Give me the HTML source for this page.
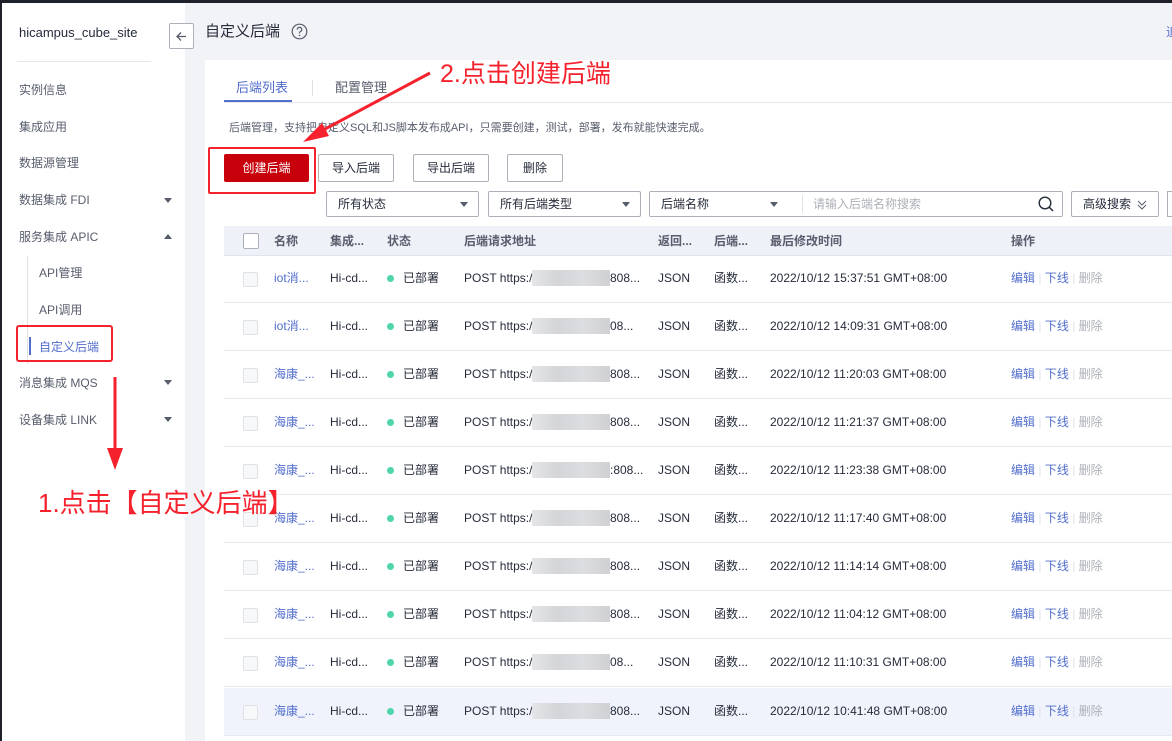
<!DOCTYPE html>
<html><head><meta charset="utf-8"><style>
*{margin:0;padding:0;box-sizing:border-box}
body{width:1172px;height:741px;overflow:hidden;background:#f2f3f7;font-family:"Liberation Sans","Noto Sans CJK SC",sans-serif;font-size:12px;color:#252b3a;position:relative}
.a{position:absolute;white-space:nowrap;line-height:16px}
#top{left:0;top:0;width:1172px;height:3px;background:#1e2129}
#lb{left:0;top:0;width:2px;height:741px;background:#1e2129}
#side{left:2px;top:3px;width:183px;height:738px;background:#fff}
.nav{left:19px;font-size:12px;color:#575d6c}
.caret{width:0;height:0;border-left:4px solid transparent;border-right:4px solid transparent;border-top:5px solid #575d6c}
.caretu{width:0;height:0;border-left:4px solid transparent;border-right:4px solid transparent;border-bottom:5px solid #575d6c}
#card{left:205px;top:60px;width:967px;height:681px;background:#fff}
.btn{height:28px;border:1px solid #adb0b8;border-radius:2px;background:#fff;font-size:12px;color:#252b3a;text-align:center;line-height:26px}
.sel{height:26px;border:1px solid #adb0b8;border-radius:2px;background:#fff;font-size:12px;line-height:24px;padding-left:11px}
.row{left:224px;width:948px;height:48px;border-bottom:1px solid #e8e9ec}
.cb{position:absolute;left:19px;top:17px;width:15px;height:15px;border:1px solid #dfe1e6;border-radius:2px;background:#f7f8fa}
.c{position:absolute;top:0;height:47px;line-height:47px;font-size:12px}
.dot{position:absolute;left:163px;top:20px;width:7px;height:7px;border-radius:50%;background:#50d4ab}
.blur{position:absolute;left:308px;top:15px;width:78px;height:16px;background:linear-gradient(90deg,#e4e5e7,#d4d5d8,#dcdde0,#cfd0d3)}
.lk{color:#526ecc}
.red{color:#f5222d}
.h{top:226px;height:30px;line-height:30px;font-weight:bold;color:#575d6c}
</style></head><body>
<div class="a" id="side"></div>
<div class="a" id="top"></div><div class="a" id="lb"></div>
<div class="a" style="left:19px;top:25px;font-size:13px;color:#252b3a">hicampus_cube_site</div>
<div class="a" style="left:17px;top:61px;width:134px;height:1px;background:#e5e6eb"></div>
<div class="a nav" style="top:82px">实例信息</div>
<div class="a nav" style="top:119px">集成应用</div>
<div class="a nav" style="top:155px">数据源管理</div>
<div class="a nav" style="top:192px">数据集成 FDI</div><div class="a caret" style="left:164px;top:198px"></div>
<div class="a nav" style="top:229px">服务集成 APIC</div><div class="a caretu" style="left:164px;top:234px"></div>
<div class="a" style="left:27px;top:256px;width:1px;height:108px;background:#dfe1e6"></div>
<div class="a nav" style="left:39px;top:265px">API管理</div>
<div class="a nav" style="left:39px;top:302px">API调用</div>
<div class="a" style="left:29px;top:337px;width:2px;height:18px;background:#526ecc"></div>
<div class="a nav" style="left:39px;top:339px;color:#526ecc">自定义后端</div>
<div class="a nav" style="top:375px">消息集成 MQS</div><div class="a caret" style="left:164px;top:380px"></div>
<div class="a nav" style="top:412px">设备集成 LINK</div><div class="a caret" style="left:164px;top:417px"></div>

<div class="a" style="left:169px;top:23px;width:25px;height:26px;border:1px solid #adb0b8;background:#fff;border-radius:2px"></div>
<svg class="a" style="left:174px;top:29px" width="15" height="15" viewBox="0 0 15 15"><path d="M12 7.5H3M7 3.5L3 7.5 7 11.5" fill="none" stroke="#575d6c" stroke-width="1.3"/></svg>
<div class="a" style="left:205px;top:23px;font-size:15px;color:#252b3a;line-height:18px">自定义后端</div>
<svg class="a" style="left:291px;top:23px" width="17" height="17" viewBox="0 0 17 17"><circle cx="8.5" cy="8.5" r="7.3" fill="none" stroke="#575d6c" stroke-width="1.2"/><path d="M6.3 6.6a2.2 2.2 0 1 1 3 2c-.6.3-.8.7-.8 1.3v.5" fill="none" stroke="#575d6c" stroke-width="1.2"/><circle cx="8.5" cy="12.4" r=".8" fill="#575d6c"/></svg>
<div class="a" style="left:1166px;top:24px;font-size:12px;color:#526ecc">追</div>

<div class="a" id="card"></div>
<div class="a" style="left:224px;top:102px;width:948px;height:1px;background:#e5e6eb"></div>
<div class="a" style="left:236px;top:80px;font-size:13px;color:#526ecc">后端列表</div>
<div class="a" style="left:224px;top:100px;width:68px;height:2px;background:#526ecc"></div>
<div class="a" style="left:312px;top:80px;width:1px;height:16px;background:#dfe1e6"></div>
<div class="a" style="left:335px;top:80px;font-size:13px;color:#575d6c">配置管理</div>
<div class="a" style="left:229px;top:120px;font-size:11px;color:#575d6c">后端管理，支持把自定义SQL和JS脚本发布成API，只需要创建，测试，部署，发布就能快速完成。</div>

<div class="a btn" style="left:224px;top:154px;width:85px;background:#c7000b;border-color:#c7000b;color:#fff">创建后端</div>
<div class="a btn" style="left:318px;top:154px;width:76px">导入后端</div>
<div class="a btn" style="left:413px;top:154px;width:76px">导出后端</div>
<div class="a btn" style="left:507px;top:154px;width:56px">删除</div>

<div class="a sel" style="left:326px;top:191px;width:153px">所有状态</div><div class="a caret" style="left:460px;top:202px"></div>
<div class="a sel" style="left:488px;top:191px;width:153px">所有后端类型</div><div class="a caret" style="left:622px;top:202px"></div>
<div class="a sel" style="left:649px;top:191px;width:414px">后端名称</div><div class="a caret" style="left:770px;top:202px"></div>
<div class="a" style="left:802px;top:195px;width:1px;height:18px;background:#dfe1e6"></div>
<div class="a" style="left:813px;top:196px;font-size:12px;color:#adb0b8">请输入后端名称搜索</div>
<svg class="a" style="left:1037px;top:195px" width="18" height="18" viewBox="0 0 18 18"><circle cx="8" cy="8" r="5.8" fill="none" stroke="#252b3a" stroke-width="1.4"/><path d="M12.2 12.2L16 16" stroke="#252b3a" stroke-width="1.5"/></svg>
<div class="a sel" style="left:1071px;top:191px;width:88px">高级搜索</div>
<svg class="a" style="left:1137px;top:199px" width="10" height="12" viewBox="0 0 10 12"><path d="M1 2l4 4 4-4M1 6l4 4 4-4" fill="none" stroke="#575d6c" stroke-width="1"/></svg>
<div class="a" style="left:1167px;top:191px;width:10px;height:26px;border:1px solid #adb0b8;background:#fff"></div>

<div class="a" style="left:224px;top:226px;width:948px;height:30px;background:#eef1f8;border-bottom:1px solid #dfe3ed"></div>
<div class="a" style="left:243px;top:233px;width:16px;height:16px;border:1px solid #adb0b8;background:#fff;border-radius:2px"></div>
<div class="a h" style="left:274px">名称</div>
<div class="a h" style="left:330px">集成...</div>
<div class="a h" style="left:387px">状态</div>
<div class="a h" style="left:464px">后端请求地址</div>
<div class="a h" style="left:658px">返回...</div>
<div class="a h" style="left:714px">后端...</div>
<div class="a h" style="left:770px">最后修改时间</div>
<div class="a h" style="left:1011px">操作</div>

<div class="a row" style="top:255px"><div class="cb"></div><div class="c lk" style="left:50px">iot消...</div><div class="c" style="left:106px">Hi-cd...</div><div class="dot"></div><div class="c" style="left:179px">已部署</div><div class="c" style="left:240px">POST https://</div><div class="blur"></div><div class="c" style="left:386px">808...</div><div class="c" style="left:434px">JSON</div><div class="c" style="left:490px">函数...</div><div class="c" style="left:546px">2022/10/12 15:37:51 GMT+08:00</div><div class="c" style="left:787px"><span class="lk">编辑</span> <span style="color:#dfe1e6">|</span> <span class="lk">下线</span> <span style="color:#dfe1e6">|</span> <span style="color:#adb0b8">删除</span></div></div>
<div class="a row" style="top:303px"><div class="cb"></div><div class="c lk" style="left:50px">iot消...</div><div class="c" style="left:106px">Hi-cd...</div><div class="dot"></div><div class="c" style="left:179px">已部署</div><div class="c" style="left:240px">POST https://</div><div class="blur"></div><div class="c" style="left:386px">08...</div><div class="c" style="left:434px">JSON</div><div class="c" style="left:490px">函数...</div><div class="c" style="left:546px">2022/10/12 14:09:31 GMT+08:00</div><div class="c" style="left:787px"><span class="lk">编辑</span> <span style="color:#dfe1e6">|</span> <span class="lk">下线</span> <span style="color:#dfe1e6">|</span> <span style="color:#adb0b8">删除</span></div></div>
<div class="a row" style="top:351px"><div class="cb"></div><div class="c lk" style="left:50px">海康_...</div><div class="c" style="left:106px">Hi-cd...</div><div class="dot"></div><div class="c" style="left:179px">已部署</div><div class="c" style="left:240px">POST https://</div><div class="blur"></div><div class="c" style="left:386px">808...</div><div class="c" style="left:434px">JSON</div><div class="c" style="left:490px">函数...</div><div class="c" style="left:546px">2022/10/12 11:20:03 GMT+08:00</div><div class="c" style="left:787px"><span class="lk">编辑</span> <span style="color:#dfe1e6">|</span> <span class="lk">下线</span> <span style="color:#dfe1e6">|</span> <span style="color:#adb0b8">删除</span></div></div>
<div class="a row" style="top:399px"><div class="cb"></div><div class="c lk" style="left:50px">海康_...</div><div class="c" style="left:106px">Hi-cd...</div><div class="dot"></div><div class="c" style="left:179px">已部署</div><div class="c" style="left:240px">POST https://</div><div class="blur"></div><div class="c" style="left:386px">808...</div><div class="c" style="left:434px">JSON</div><div class="c" style="left:490px">函数...</div><div class="c" style="left:546px">2022/10/12 11:21:37 GMT+08:00</div><div class="c" style="left:787px"><span class="lk">编辑</span> <span style="color:#dfe1e6">|</span> <span class="lk">下线</span> <span style="color:#dfe1e6">|</span> <span style="color:#adb0b8">删除</span></div></div>
<div class="a row" style="top:447px"><div class="cb"></div><div class="c lk" style="left:50px">海康_...</div><div class="c" style="left:106px">Hi-cd...</div><div class="dot"></div><div class="c" style="left:179px">已部署</div><div class="c" style="left:240px">POST https:/</div><div class="blur"></div><div class="c" style="left:386px">:808...</div><div class="c" style="left:434px">JSON</div><div class="c" style="left:490px">函数...</div><div class="c" style="left:546px">2022/10/12 11:23:38 GMT+08:00</div><div class="c" style="left:787px"><span class="lk">编辑</span> <span style="color:#dfe1e6">|</span> <span class="lk">下线</span> <span style="color:#dfe1e6">|</span> <span style="color:#adb0b8">删除</span></div></div>
<div class="a row" style="top:495px"><div class="cb"></div><div class="c lk" style="left:50px">海康_...</div><div class="c" style="left:106px">Hi-cd...</div><div class="dot"></div><div class="c" style="left:179px">已部署</div><div class="c" style="left:240px">POST https://1</div><div class="blur"></div><div class="c" style="left:386px">808...</div><div class="c" style="left:434px">JSON</div><div class="c" style="left:490px">函数...</div><div class="c" style="left:546px">2022/10/12 11:17:40 GMT+08:00</div><div class="c" style="left:787px"><span class="lk">编辑</span> <span style="color:#dfe1e6">|</span> <span class="lk">下线</span> <span style="color:#dfe1e6">|</span> <span style="color:#adb0b8">删除</span></div></div>
<div class="a row" style="top:543px"><div class="cb"></div><div class="c lk" style="left:50px">海康_...</div><div class="c" style="left:106px">Hi-cd...</div><div class="dot"></div><div class="c" style="left:179px">已部署</div><div class="c" style="left:240px">POST https://</div><div class="blur"></div><div class="c" style="left:386px">808...</div><div class="c" style="left:434px">JSON</div><div class="c" style="left:490px">函数...</div><div class="c" style="left:546px">2022/10/12 11:14:14 GMT+08:00</div><div class="c" style="left:787px"><span class="lk">编辑</span> <span style="color:#dfe1e6">|</span> <span class="lk">下线</span> <span style="color:#dfe1e6">|</span> <span style="color:#adb0b8">删除</span></div></div>
<div class="a row" style="top:591px"><div class="cb"></div><div class="c lk" style="left:50px">海康_...</div><div class="c" style="left:106px">Hi-cd...</div><div class="dot"></div><div class="c" style="left:179px">已部署</div><div class="c" style="left:240px">POST https://</div><div class="blur"></div><div class="c" style="left:386px">808...</div><div class="c" style="left:434px">JSON</div><div class="c" style="left:490px">函数...</div><div class="c" style="left:546px">2022/10/12 11:04:12 GMT+08:00</div><div class="c" style="left:787px"><span class="lk">编辑</span> <span style="color:#dfe1e6">|</span> <span class="lk">下线</span> <span style="color:#dfe1e6">|</span> <span style="color:#adb0b8">删除</span></div></div>
<div class="a row" style="top:639px"><div class="cb"></div><div class="c lk" style="left:50px">海康_...</div><div class="c" style="left:106px">Hi-cd...</div><div class="dot"></div><div class="c" style="left:179px">已部署</div><div class="c" style="left:240px">POST https://</div><div class="blur"></div><div class="c" style="left:386px">08...</div><div class="c" style="left:434px">JSON</div><div class="c" style="left:490px">函数...</div><div class="c" style="left:546px">2022/10/12 11:10:31 GMT+08:00</div><div class="c" style="left:787px"><span class="lk">编辑</span> <span style="color:#dfe1e6">|</span> <span class="lk">下线</span> <span style="color:#dfe1e6">|</span> <span style="color:#adb0b8">删除</span></div></div>
<div class="a row" style="top:688px;background:#f0f3fb"><div class="cb"></div><div class="c lk" style="left:50px">海康_...</div><div class="c" style="left:106px">Hi-cd...</div><div class="dot"></div><div class="c" style="left:179px">已部署</div><div class="c" style="left:240px">POST https://</div><div class="blur"></div><div class="c" style="left:386px">808...</div><div class="c" style="left:434px">JSON</div><div class="c" style="left:490px">函数...</div><div class="c" style="left:546px">2022/10/12 10:41:48 GMT+08:00</div><div class="c" style="left:787px"><span class="lk">编辑</span> <span style="color:#dfe1e6">|</span> <span class="lk">下线</span> <span style="color:#dfe1e6">|</span> <span style="color:#adb0b8">删除</span></div></div>

<!-- annotations -->
<div class="a" style="left:208px;top:147px;width:108px;height:47px;border:2px solid #f5222d;border-radius:2px"></div>
<div class="a" style="left:16px;top:325px;width:97px;height:37px;border:2px solid #f5222d;border-radius:3px"></div>
<svg class="a" style="left:0;top:0" width="1172" height="741"><path d="M430 73L312 136" stroke="#f5222d" stroke-width="3"/><path d="M303 142L322 123 329 136Z" fill="#f5222d"/><path d="M115 377V450" stroke="#f5222d" stroke-width="3"/><path d="M107 448L115 470 123 448Z" fill="#f5222d"/></svg>
<div class="a red" style="left:440px;top:59px;font-size:25px;line-height:30px">2.点击创建后端</div>
<div class="a red" style="left:38px;top:488px;font-size:26px;line-height:30px">1.点击【自定义后端】</div>
</body></html>
